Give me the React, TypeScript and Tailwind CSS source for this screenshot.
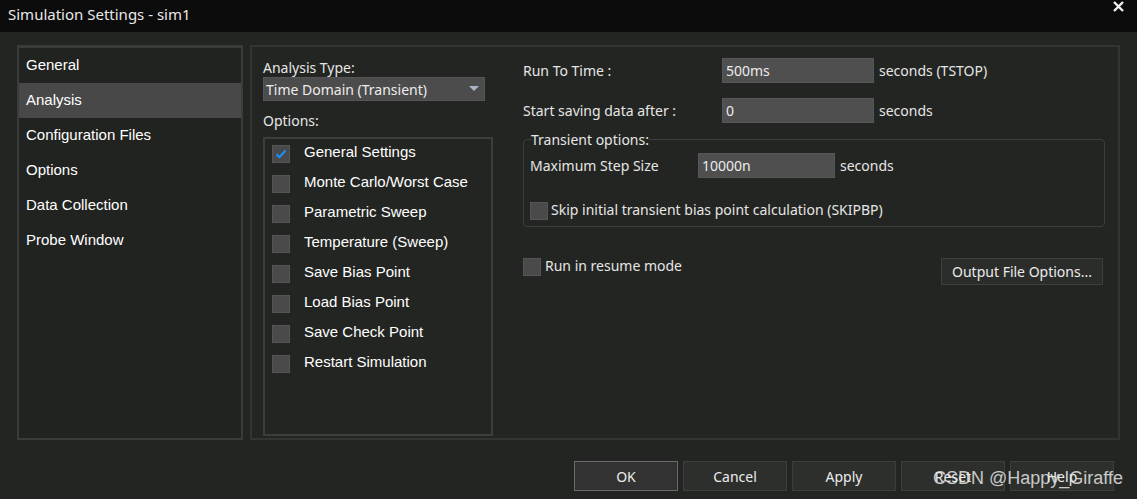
import React from 'react';

const SEGOE = "font-['Noto_Sans',sans-serif]";
const ARIAL = "font-['Liberation_Sans',Arial,sans-serif]";

const NAV = ['General', 'Analysis', 'Configuration Files', 'Options', 'Data Collection', 'Probe Window'];

const OPTIONS = [
  'General Settings',
  'Monte Carlo/Worst Case',
  'Parametric Sweep',
  'Temperature (Sweep)',
  'Save Bias Point',
  'Load Bias Point',
  'Save Check Point',
  'Restart Simulation',
];

const Box: React.FC<{ checked?: boolean }> = ({ checked }) => (
  <div className="w-[18px] h-[18px] shrink-0 bg-[#4a4a4a] border border-[#555] flex items-center justify-center">
    {checked && (
      <svg width="12" height="10" viewBox="0 0 12 10">
        <path d="M1.5 5.2 L4.5 8.2 L10.5 1.5" fill="none" stroke="#1b8fff" strokeWidth="2" />
      </svg>
    )}
  </div>
);

const Field: React.FC<{ value: string; w: string }> = ({ value, w }) => (
  <div className={`${w} h-[25px] bg-[#4f4f4f] border border-[#575757] px-[3px] flex items-center text-[14px] text-[#ececec]`}>
    {value}
  </div>
);

const Btn: React.FC<{ label: string; primary?: boolean }> = ({ label, primary }) => (
  <div
    className={`w-[104px] h-[30px] flex items-center justify-center text-[14px] text-[#ececec] bg-[#2d2f2d] border ${
      primary ? 'border-[#6b6b6b] bg-[#323232]' : 'border-[#3c3e3c]'
    }`}
  >
    {label}
  </div>
);

export default function App() {
  return (
    <div className={`w-[1137px] h-[499px] bg-[#232522] relative overflow-hidden ${SEGOE}`}>
      {/* title bar */}
      <div className="h-[32px] bg-[#0c0c0c] flex items-center justify-between pl-[8px] pr-[13px]">
        <span className="text-[15px] text-[#e8e8e8] -mt-[3px]">Simulation Settings - sim1</span>
        <svg width="11" height="11" viewBox="0 0 11 11" className="-mt-[20px]">
          <path d="M1 1 L10 10 M10 1 L1 10" stroke="#f2f2f2" strokeWidth="2.4" />
        </svg>
      </div>

      <div className="flex gap-[7px] pl-[17px] pt-[13px]">
        {/* nav list */}
        <div className="w-[226px] h-[395px] border-2 border-t-[3px] border-[#3a3c3a] bg-[#212321]">
          {NAV.map((n) => (
            <div
              key={n}
              className={`h-[35px] pl-[7px] flex items-center text-[15px] text-white ${ARIAL} ${
                n === 'Analysis' ? 'bg-[#484848]' : ''
              }`}
            >
              <span className="-mt-[1px]">{n}</span>
            </div>
          ))}
        </div>

        {/* main panel */}
        <div className="w-[870px] h-[395px] border-2 border-[#333533] flex pl-[11px]">
          {/* left column */}
          <div className="w-[230px] flex flex-col">
            <div className="mt-[13px] text-[14px] leading-[16px] text-[#e6e6e6]">Analysis Type:</div>
            <div className="mt-[1px] w-[222px] h-[24px] bg-[#4c4c4c] border border-[#555] flex items-center justify-between px-[2px] text-[14px] text-[#ececec]">
              <span>Time Domain (Transient)</span>
              <svg width="10" height="6" viewBox="0 0 10 6" className="mr-[3px]">
                <path d="M0 0 L10 0 L5 5 Z" fill="#a9b6ca" />
              </svg>
            </div>
            <div className="mt-[12px] text-[14px] leading-[16px] text-[#e6e6e6]">Options:</div>
            <div className="mt-[8px] h-[299px] border-2 border-[#3c3e3c] pt-[6px] pl-[7px]">
              {OPTIONS.map((o, i) => (
                <div key={o} className="h-[30px] flex items-start">
                  <Box checked={i === 0} />
                  <span className={`ml-[14px] -mt-[4px] text-[15px] text-white ${ARIAL}`}>{o}</span>
                </div>
              ))}
            </div>
          </div>

          {/* right column */}
          <div className="ml-[30px] w-[582px] flex flex-col text-[14px] text-[#e6e6e6]">
            <div className="mt-[11px] flex items-center">
              <span className="w-[199px]">Run To Time :</span>
              <Field value="500ms" w="w-[152px]" />
              <span className="ml-[5px]">seconds (TSTOP)</span>
            </div>
            <div className="mt-[15px] flex items-center">
              <span className="w-[199px]">Start saving data after :</span>
              <Field value="0" w="w-[152px]" />
              <span className="ml-[5px]">seconds</span>
            </div>
            <fieldset className="mt-[6px] h-[98px] border border-[#3c3e3c] rounded-[4px] pl-[6px] pr-[6px]">
              <legend className="px-[0px] ml-[1px] text-[#e6e6e6]">Transient options:</legend>
              <div className="mt-[3px] flex items-center">
                <span className="w-[168px]">Maximum Step Size</span>
                <Field value="10000n" w="w-[137px]" />
                <span className="ml-[5px]">seconds</span>
              </div>
              <div className="mt-[23px] flex items-center">
                <Box />
                <span className="ml-[3px] -mt-[2px]">Skip initial transient bias point calculation (SKIPBP)</span>
              </div>
            </fieldset>
            <div className="mt-[29px] flex items-start justify-between pr-[2px]">
              <div className="flex items-center mt-[1px]">
                <Box />
                <span className="ml-[4px] -mt-[2px]">Run in resume mode</span>
              </div>
              <div className="mt-[2px] w-[162px] h-[27px] bg-[#2b2d2b] border border-[#3e403e] flex items-center justify-center text-[#ececec]">
                Output File Options...
              </div>
            </div>
          </div>
        </div>
      </div>

      {/* dialog buttons */}
      <div className="flex justify-end gap-[5px] pr-[23px] mt-[21px]">
        <Btn label="OK" primary />
        <Btn label="Cancel" />
        <Btn label="Apply" />
        <Btn label="Reset" />
        <Btn label="Help" />
      </div>

      {/* watermark */}
      <div className="absolute left-[933px] top-[465px] text-[18px] text-[#e6e6e6]/85 font-['Liberation_Sans',Arial,sans-serif] pointer-events-none">
        CSDN @Happy_Giraffe
      </div>
    </div>
  );
}
